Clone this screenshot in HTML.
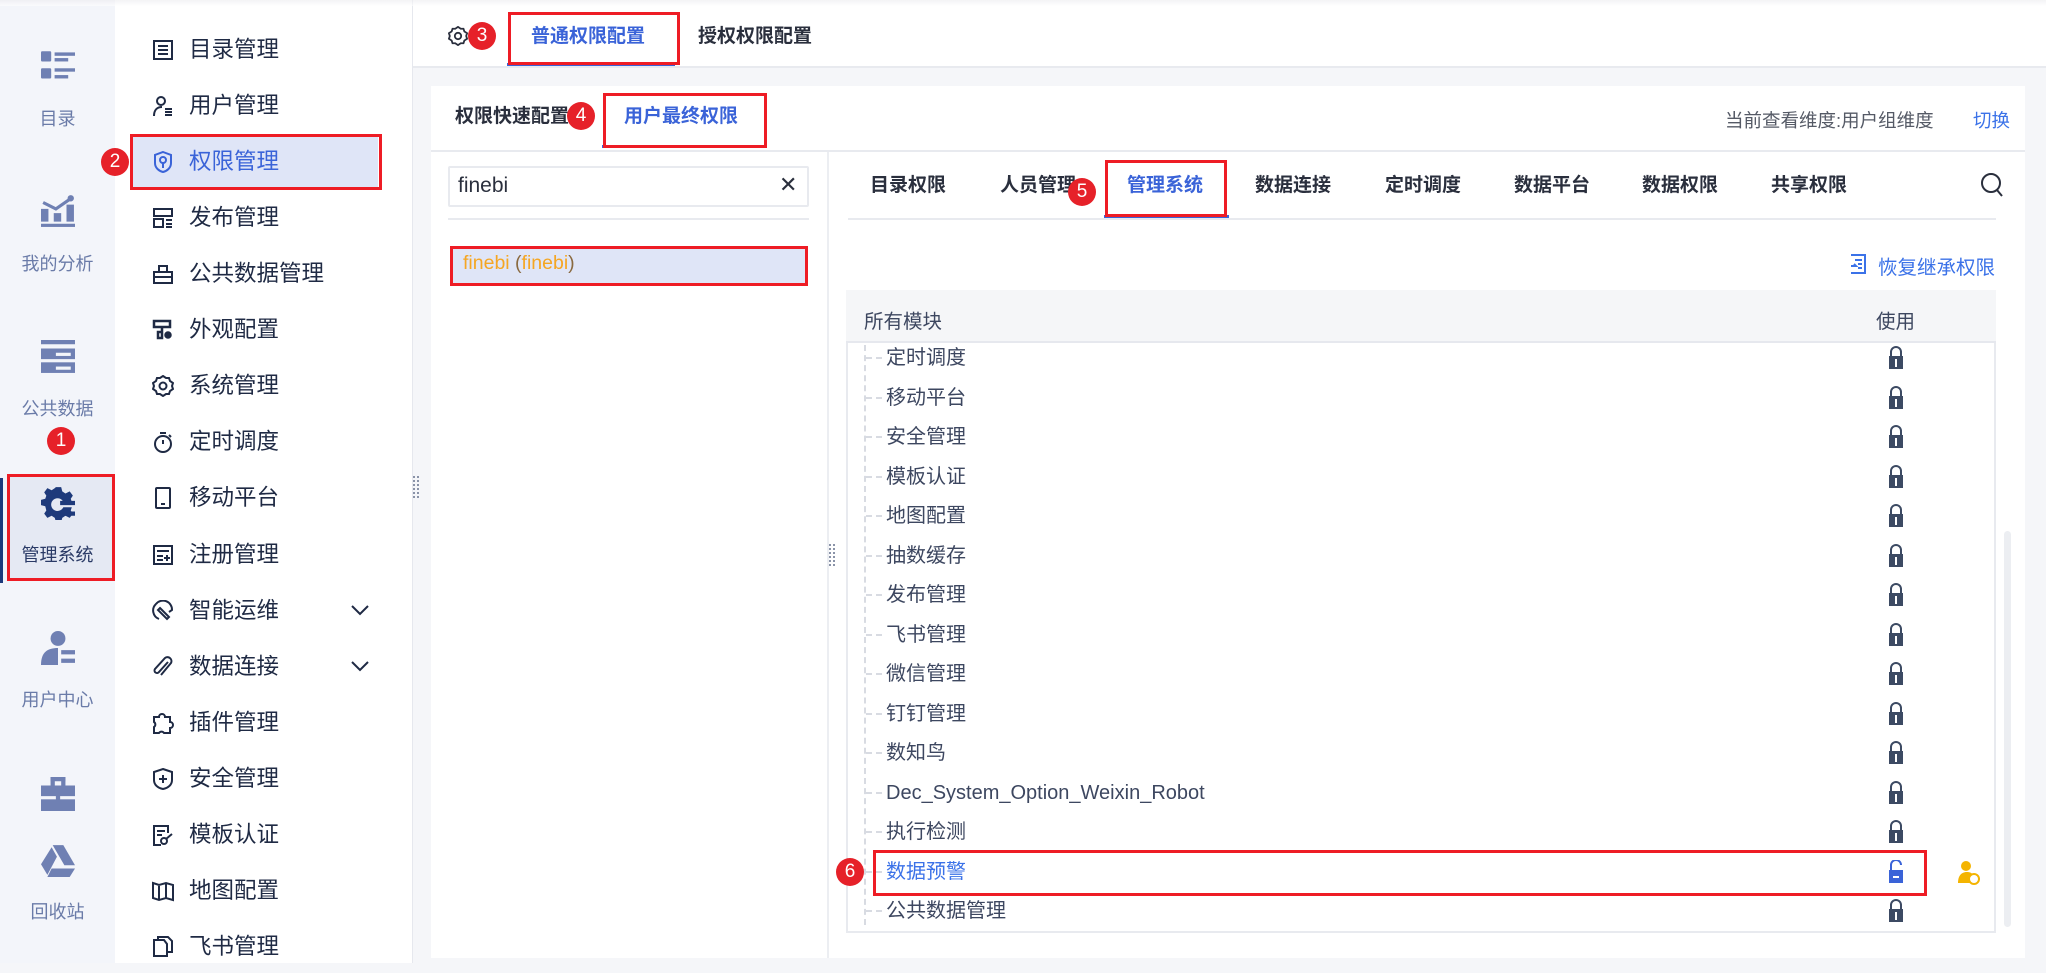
<!DOCTYPE html>
<html><head><meta charset="utf-8"><style>
*{margin:0;padding:0;box-sizing:border-box}
body{width:2046px;height:973px;overflow:hidden;background:#f5f6f9;font-family:"Liberation Sans","Noto Sans CJK SC",sans-serif;position:relative}
.a{position:absolute}
.rail{left:0;top:0;width:115px;height:973px;background:#f3f5fa}
.rl{position:absolute;width:115px;text-align:center;font-size:18px;color:#6a7ba8}
.menu{left:115px;top:0;width:297px;height:973px;background:#fff}
.mi{position:absolute;left:189px;font-size:22.5px;color:#1f2a44;line-height:30px;transform:translateY(-15px)}
.ic{position:absolute;left:152px;width:22px;height:22px;transform:translateY(-11px)}
.badge{position:absolute;width:28px;height:28px;border-radius:50%;background:#e62129;color:#fff;font-size:19px;text-align:center;line-height:28px;transform:translate(-14px,-14px);font-family:"Liberation Sans",sans-serif}
.red{position:absolute;border:3px solid #ee1c25}
.tab{position:absolute;font-size:19px;font-weight:bold;color:#2a2f3d;line-height:26px;transform:translateY(-13px)}
.row{position:absolute;left:886px;font-size:20px;color:#3d4760;line-height:24px;transform:translateY(-12px)}
.lock{position:absolute;left:1887px;transform:translateY(-12px)}
</style></head><body>
<div class="a" style="left:0;top:0;width:2046px;height:6px;background:linear-gradient(#ececef,#fff);z-index:5;opacity:.6"></div>
<div class="a rail"></div>
<svg class="a" style="left:41px;top:50px" width="34" height="32" viewBox="0 0 30 28" fill="#6f80b3"><rect x="0" y="1" width="9" height="9" rx="1"/><rect x="12" y="2" width="18" height="3"/><rect x="12" y="7" width="12" height="3"/><rect x="0" y="16" width="9" height="9" rx="1"/><rect x="12" y="16" width="18" height="3"/><rect x="12" y="22" width="12" height="3"/></svg>
<div class="rl" style="top:105px">目录</div>
<svg class="a" style="left:41px;top:194px" width="34" height="34" viewBox="0 0 32 32" fill="#6f80b3"><rect x="0" y="14" width="7" height="12"/><rect x="12" y="18" width="7" height="8"/><rect x="24" y="10" width="7" height="16"/><rect x="0" y="28" width="32" height="3"/><path d="M2 8 L14 14 L27 5" stroke="#6f80b3" stroke-width="3" fill="none"/><circle cx="28" cy="4" r="3"/></svg>
<div class="rl" style="top:250px">我的分析</div>
<svg class="a" style="left:41px;top:340px" width="34" height="34" viewBox="0 0 32 32" fill="#6f80b3"><rect x="0" y="0" width="32" height="4"/><rect x="0" y="8" width="32" height="10"/><rect x="0" y="21" width="32" height="10"/><rect x="14" y="12" width="14" height="3" fill="#f3f5fa"/><rect x="14" y="25" width="14" height="3" fill="#f3f5fa"/></svg>
<div class="rl" style="top:395px">公共数据</div>
<div class="badge" style="left:61px;top:441px">1</div>
<div class="a" style="left:7px;top:474px;width:107px;height:107px;background:#e5e9f3"></div>
<div class="a" style="left:0;top:478px;width:3px;height:105px;background:#1e3a7b"></div>
<svg class="a" style="left:41px;top:486px" width="34" height="34" viewBox="0 0 32 32" fill="#1e3a7b"><path d="M14 1h5l1 4 3 2 4-2 3 4-2 3 1 3h-8a6 6 0 1 0 0 5h8l-1 3 2 3-3 4-4-2-3 2-1 4h-5l-1-4-3-2-4 2-3-4 2-3-1-4-4-1v-5l4-1 1-3-2-3 3-4 4 2 3-2z"/><rect x="18" y="14" width="14" height="4"/><rect x="18" y="24" width="14" height="4"/></svg>
<div class="rl" style="top:541px;color:#2a3a66">管理系统</div>
<div class="red" style="left:7px;top:474px;width:108px;height:107px"></div>
<svg class="a" style="left:41px;top:631px" width="34" height="34" viewBox="0 0 32 32" fill="#6f80b3"><circle cx="16" cy="7" r="7"/><path d="M0 32 C0 20 6 16 16 16 V32Z"/><rect x="19" y="18" width="13" height="4"/><rect x="19" y="26" width="13" height="4"/></svg>
<div class="rl" style="top:686px">用户中心</div>
<svg class="a" style="left:41px;top:777px" width="34" height="34" viewBox="0 0 32 32" fill="#6f80b3"><rect x="9" y="0" width="14" height="4"/><rect x="9" y="0" width="4" height="9"/><rect x="19" y="0" width="4" height="9"/><rect x="0" y="8" width="32" height="10"/><rect x="0" y="21" width="32" height="11"/><rect x="14" y="14" width="4" height="10"/></svg>
<svg class="a" style="left:41px;top:845px" width="34" height="32" viewBox="0 0 32 30" fill="#6f80b3"><path d="M11 0h10l11 19H22z"/><path d="M10 2l5 9-9 17-6-10z"/><path d="M10 22h22l-5 8H6z"/></svg>
<div class="rl" style="top:898px">回收站</div>
<div class="a menu"></div>
<div class="a" style="left:133px;top:136px;width:245px;height:51px;background:#dfe5f7"></div>
<div class="red" style="left:130px;top:134px;width:252px;height:56px"></div>
<div class="badge" style="left:115px;top:162px">2</div>
<svg class="ic" style="top:50px" viewBox="0 0 22 22" fill="none" stroke="#1f2a44" stroke-width="2"><rect x="2" y="2" width="18" height="18"/><path d="M6 7h10M6 11h10M6 15h10"/></svg>
<div class="mi" style="top:50px">目录管理</div>
<svg class="ic" style="top:106px" viewBox="0 0 22 22" fill="none" stroke="#1f2a44" stroke-width="2"><circle cx="9" cy="6" r="4"/><path d="M2 21c0-6 3-9 8-9M13 14h7M13 17h7M13 20h7"/></svg>
<div class="mi" style="top:106px">用户管理</div>
<svg class="ic" style="top:162px" viewBox="0 0 22 22" fill="none" stroke="#3a63d8" stroke-width="2"><path d="M11 1l8 3v8c0 5-4 8-8 9-4-1-8-4-8-9V4z"/><circle cx="11" cy="9" r="3"/><path d="M11 12v5"/></svg>
<div class="mi" style="top:162px;color:#3a63d8">权限管理</div>
<svg class="ic" style="top:218px" viewBox="0 0 22 22" fill="none" stroke="#1f2a44" stroke-width="2"><rect x="2" y="2" width="18" height="7"/><rect x="2" y="12" width="9" height="8"/><path d="M14 13h6M14 17h6M14 20h6"/></svg>
<div class="mi" style="top:218px">发布管理</div>
<svg class="ic" style="top:274px" viewBox="0 0 22 22" fill="none" stroke="#1f2a44" stroke-width="2"><path d="M2 9h18v11H2zM7 9V3h8v6M2 14h18"/></svg>
<div class="mi" style="top:274px">公共数据管理</div>
<svg class="ic" style="top:330px" viewBox="0 0 22 22" fill="none" stroke="#1f2a44" stroke-width="2.5"><path d="M2 2h16v6H2zM10 8v5h-4v6h4v-6"/><circle cx="16" cy="16" r="2.5" fill="#1f2a44"/></svg>
<div class="mi" style="top:330px">外观配置</div>
<svg class="ic" style="top:386px" viewBox="0 0 22 22" fill="none" stroke="#1f2a44" stroke-width="2"><path d="M11 1l3 2h3l1 3 3 2-1 3 1 3-3 2-1 3h-3l-3 2-3-2H5l-1-3-3-2 1-3-1-3 3-2 1-3h3z"/><circle cx="11" cy="11" r="3.5"/></svg>
<div class="mi" style="top:386px">系统管理</div>
<svg class="ic" style="top:442px" viewBox="0 0 22 22" fill="none" stroke="#1f2a44" stroke-width="2"><circle cx="11" cy="13" r="8"/><path d="M11 9v4M8 2h6M17 4l2 2"/></svg>
<div class="mi" style="top:442px">定时调度</div>
<svg class="ic" style="top:498px" viewBox="0 0 22 22" fill="none" stroke="#1f2a44" stroke-width="2"><rect x="4" y="1" width="14" height="20" rx="1"/><path d="M9 17h4"/></svg>
<div class="mi" style="top:498px">移动平台</div>
<svg class="ic" style="top:555px" viewBox="0 0 22 22" fill="none" stroke="#1f2a44" stroke-width="2"><rect x="2" y="2" width="18" height="18"/><path d="M5 7h12M5 12h6M5 16h6M15 11v6M12 14h6"/></svg>
<div class="mi" style="top:555px">注册管理</div>
<svg class="ic" style="top:611px" viewBox="0 0 22 22" fill="none" stroke="#1f2a44" stroke-width="2"><path d="M4 4a9 9 0 0 1 16 6l-3 2M4 4a9 9 0 0 0 3 15"/><path d="M8 8l9 9-2 2-9-9z"/></svg>
<div class="mi" style="top:611px">智能运维</div>
<svg class="a" style="left:350px;top:603px" width="20" height="14" viewBox="0 0 20 14" fill="none" stroke="#1f2a44" stroke-width="2"><path d="M2 3l8 8 8-8"/></svg>
<svg class="ic" style="top:667px" viewBox="0 0 22 22" fill="none" stroke="#1f2a44" stroke-width="2"><path d="M16 6l-9 10a2.5 2.5 0 0 1-4-3l10-11a4 4 0 0 1 6 5L9 19"/></svg>
<div class="mi" style="top:667px">数据连接</div>
<svg class="a" style="left:350px;top:659px" width="20" height="14" viewBox="0 0 20 14" fill="none" stroke="#1f2a44" stroke-width="2"><path d="M2 3l8 8 8-8"/></svg>
<svg class="ic" style="top:723px" viewBox="0 0 22 22" fill="none" stroke="#1f2a44" stroke-width="2"><path d="M2 5h5a3 3 0 0 1 6 0h5v5a3 3 0 0 1 0 6v5h-6a3 3 0 0 0-5 0H2v-6a3 3 0 0 0 0-5z"/></svg>
<div class="mi" style="top:723px">插件管理</div>
<svg class="ic" style="top:779px" viewBox="0 0 22 22" fill="none" stroke="#1f2a44" stroke-width="2"><path d="M11 1l9 3v8c0 5-4 8-9 9-5-1-9-4-9-9V4z"/><path d="M11 7v8M7 11h8"/></svg>
<div class="mi" style="top:779px">安全管理</div>
<svg class="ic" style="top:835px" viewBox="0 0 22 22" fill="none" stroke="#1f2a44" stroke-width="2"><path d="M16 9V2H2v19h7M5 7h8M5 11h5"/><circle cx="12" cy="17" r="3"/><path d="M14 15l6-5"/></svg>
<div class="mi" style="top:835px">模板认证</div>
<svg class="ic" style="top:891px" viewBox="0 0 22 22" fill="none" stroke="#1f2a44" stroke-width="2"><path d="M1 3l6 2 7-2 7 2v15l-7-2-7 2-6-2zM7 5v15M14 3v15"/></svg>
<div class="mi" style="top:891px">地图配置</div>
<svg class="ic" style="top:947px" viewBox="0 0 22 22" fill="none" stroke="#1f2a44" stroke-width="2"><path d="M2 4h10l3 4v12H2zM6 4V1h10l4 4v11h-5"/></svg>
<div class="mi" style="top:947px">飞书管理</div>
<div class="a" style="left:412px;top:0;width:1px;height:973px;background:#e6e8ee"></div>
<div class="a" style="left:413px;top:476px;width:6px;height:22px;border-left:2px dotted #8a93a8;border-right:2px dotted #8a93a8"></div>
<div class="a" style="left:413px;top:0;width:1633px;height:68px;background:#fff;border-bottom:2px solid #e8eaef"></div>
<svg class="a" style="left:448px;top:26px" width="20" height="20" viewBox="0 0 22 22" fill="none" stroke="#2a2f3d" stroke-width="2"><path d="M11 1l3 2h3l1 3 3 2-1 3 1 3-3 2-1 3h-3l-3 2-3-2H5l-1-3-3-2 1-3-1-3 3-2 1-3h3z"/><circle cx="11" cy="11" r="3.5"/></svg>
<div class="badge" style="left:482px;top:36px">3</div>
<div class="a" style="left:507px;top:63px;width:168px;height:3px;background:#3a63d8"></div>
<div class="tab" style="left:531px;top:37px;color:#3a63d8">普通权限配置</div>
<div class="red" style="left:508px;top:12px;width:172px;height:53px"></div>
<div class="tab" style="left:698px;top:37px">授权权限配置</div>
<div class="a" style="left:431px;top:86px;width:1594px;height:872px;background:#fff"></div>
<div class="a" style="left:431px;top:150px;width:1594px;height:2px;background:#e8eaef"></div>
<div class="tab" style="left:455px;top:117px">权限快速配置</div>
<div class="badge" style="left:581px;top:116px">4</div>
<div class="a" style="left:602px;top:145px;width:164px;height:3px;background:#3a63d8"></div>
<div class="tab" style="left:624px;top:117px;color:#3a63d8">用户最终权限</div>
<div class="red" style="left:603px;top:93px;width:164px;height:55px"></div>
<div class="a" style="left:1725px;top:107px;font-size:18.5px;color:#555a66">当前查看维度:用户组维度</div>
<div class="a" style="left:1973px;top:107px;font-size:18.5px;color:#3b72e8">切换</div>
<div class="a" style="left:827px;top:152px;width:2px;height:806px;background:#eceef2"></div>
<div class="a" style="left:448px;top:166px;width:361px;height:41px;border:2px solid #e8eaef;border-radius:2px"></div>
<div class="a" style="left:458px;top:174px;font-size:21px;color:#2a2f3d">finebi</div>
<div class="a" style="left:779px;top:172px;font-size:22px;color:#2a2f3d">✕</div>
<div class="a" style="left:448px;top:218px;width:361px;height:2px;background:#e8eaef"></div>
<div class="a" style="left:450px;top:247px;width:356px;height:37px;background:#dfe5f7"></div>
<div class="a" style="left:463px;top:252px;font-size:19.5px;color:#f5a623">finebi <span style="color:#8a6a40">(</span>finebi<span style="color:#8a6a40">)</span></div>
<div class="red" style="left:450px;top:246px;width:358px;height:40px"></div>
<div class="a" style="left:829px;top:544px;width:6px;height:22px;border-left:2px dotted #8a93a8;border-right:2px dotted #8a93a8"></div>
<div class="tab" style="left:870px;top:186px">目录权限</div>
<div class="tab" style="left:1000px;top:186px">人员管理</div>
<div class="badge" style="left:1082px;top:192px">5</div>
<div class="a" style="left:1104px;top:215px;width:125px;height:3px;background:#3a63d8"></div>
<div class="tab" style="left:1127px;top:186px;color:#3a63d8">管理系统</div>
<div class="red" style="left:1105px;top:160px;width:122px;height:57px"></div>
<div class="tab" style="left:1255px;top:186px">数据连接</div>
<div class="tab" style="left:1385px;top:186px">定时调度</div>
<div class="tab" style="left:1514px;top:186px">数据平台</div>
<div class="tab" style="left:1642px;top:186px">数据权限</div>
<div class="tab" style="left:1771px;top:186px">共享权限</div>
<svg class="a" style="left:1980px;top:172px" width="24" height="26" viewBox="0 0 24 26" fill="none" stroke="#2a2f3d" stroke-width="2"><circle cx="11" cy="11" r="9"/><path d="M17 18l5 6"/></svg>
<div class="a" style="left:848px;top:218px;width:1148px;height:2px;background:#e8eaef"></div>
<svg class="a" style="left:1850px;top:254px" width="16" height="20" viewBox="0 0 16 20" fill="none" stroke="#3b72e8" stroke-width="2"><path d="M1 1h14v18H1M5 6h7M8 10h4M8 14h4M1 12h5l-2-2"/></svg>
<div class="a" style="left:1878px;top:251px;font-size:19.5px;color:#3b72e8">恢复继承权限</div>
<div class="a" style="left:846px;top:290px;width:1150px;height:643px;border:2px solid #e8eaef;border-top:none"></div>
<div class="a" style="left:846px;top:290px;width:1150px;height:53px;background:#f5f6f8;border-bottom:2px solid #e6e8ee"></div>
<div class="a" style="left:864px;top:305px;font-size:19.5px;color:#3d4760">所有模块</div>
<div class="a" style="left:1876px;top:305px;font-size:19.5px;color:#3d4760">使用</div>
<div class="a" style="left:2004px;top:531px;width:7px;height:396px;background:#eceef2;border-radius:4px"></div>
<div class="a" style="left:864px;top:345px;width:0;height:580px;border-left:2px dashed #d8dbe2"></div>
<div id="rows"></div>
<div class="red" style="left:873px;top:850px;width:1054px;height:46px"></div>
<div class="badge" style="left:850px;top:872px">6</div>
<svg class="a" style="left:1958px;top:861px" width="22" height="24" viewBox="0 0 22 24" fill="#f4b400"><circle cx="8" cy="5" r="5"/><path d="M0 22c0-8 4-11 9-11 3 0 5 1 6 3v8z"/><circle cx="16" cy="18" r="5" fill="#fff" stroke="#f4b400" stroke-width="2"/></svg>
<div class="a" style="left:0;top:963px;width:2046px;height:10px;background:#f5f6f9"></div>
<script>
var n=["定时调度","移动平台","安全管理","模板认证","地图配置","抽数缓存","发布管理","飞书管理","微信管理","钉钉管理","数知鸟","Dec_System_Option_Weixin_Robot","执行检测","数据预警","公共数据管理"];
var h="";
for(var i=0;i<n.length;i++){var y=358+i*39.5;var blue=i==13;
h+='<div class="a" style="left:866px;top:'+(y-1)+'px;width:16px;border-top:2px dashed #d8dbe2"></div>';
h+='<div class="row" style="top:'+y+'px;'+(blue?'color:#3b72e8':'')+'">'+n[i]+'</div>';
var c=blue?'#3a63d8':'#3c4a63';
h+='<svg class="lock" style="top:'+y+'px" width="18" height="24" viewBox="0 0 18 24"><path d="'+(blue?'M4 10V5a5 5 0 0 1 10 0':'M4 11V6a5 5 0 0 1 10 0v5')+'" fill="none" stroke="'+c+'" stroke-width="2"/><rect x="2" y="10" width="14" height="13" fill="'+c+'"/>'+(blue?'<rect x="6" y="16" width="6" height="2" fill="#fff"/>':'<rect x="8" y="13" width="2" height="8" fill="#fff"/>')+'</svg>';}
document.getElementById("rows").innerHTML=h;
</script>
</body></html>
